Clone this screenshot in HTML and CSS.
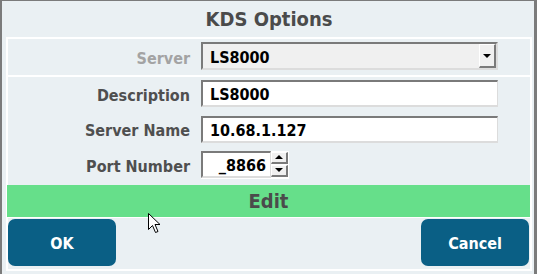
FILE: index.html
```html
<!DOCTYPE html>
<html lang="en">
<head>
    <meta charset="UTF-8">
    <title>KDS Options</title>
    <link rel="stylesheet" href="styles.css">
</head>
<body>
    <div class="dialog">
        <h2 class="title">KDS Options</h2>
        <div class="panel">
            <div class="row server-row">
                <label class="disabled">Server</label>
                <div class="select">
                    <span class="value">LS8000</span>
                    <span class="drop"><i class="tri down"></i></span>
                </div>
            </div>
            <div class="fields">
                <div class="row">
                    <label>Description</label>
                    <div class="input">LS8000</div>
                </div>
                <div class="row">
                    <label>Server Name</label>
                    <div class="input">10.68.1.127</div>
                </div>
                <div class="row">
                    <label>Port Number</label>
                    <div class="spin">
                        <div class="input port">_8866</div>
                        <div class="spin-btns">
                            <span class="sbtn"><i class="tri up"></i></span>
                            <span class="sbtn"><i class="tri down"></i></span>
                        </div>
                    </div>
                </div>
            </div>
            <div class="edit-bar">Edit</div>
            <div class="buttons">
                <button class="btn">OK</button>
                <button class="btn">Cancel</button>
            </div>
        </div>
        <svg class="cursor" width="13" height="21" viewBox="0 0 13 21">
            <path d="M0.5 0.5 L0.5 16.5 L4.5 12.5 L7.5 19.5 L10 18.5 L7 11.5 L12 11.5 Z" fill="#fff" stroke="#000" stroke-width="1"/>
        </svg>
    </div>
</body>
</html>
```

FILE: styles.css
```css
body {
    margin: 0;
    background: #7b7b7b;
    font-family: "DejaVu Sans Condensed", "DejaVu Sans", sans-serif;
    font-stretch: condensed;
    font-weight: bold;
}

.dialog {
    position: relative;
    margin: 1px 3px 0 2px;
    height: 273px;
    background: #eaf0f3;
    padding: 0 2px 0 4px;
    box-sizing: border-box;
}

.title {
    margin: 0;
    height: 36px;
    line-height: 36px;
    font-size: 20px;
    text-align: center;
    color: #4b4b4b;
}

.panel {
    border: 2px solid #fff;
    height: 234px;
    box-sizing: border-box;
}

.row {
    display: flex;
    align-items: center;
    gap: 11px;
}

.row label {
    width: 182px;
    text-align: right;
    font-size: 16px;
    color: #4f4f4f;
    padding-top: 3px;
}

.row label.disabled {
    color: #a3a3a3;
}

.server-row {
    height: 38px;
    align-items: flex-start;
    padding-top: 3px;
    box-sizing: border-box;
    border-bottom: 2px solid #fff;
}

.server-row label {
    line-height: 28px;
}

.select {
    width: 297px;
    height: 28px;
    box-sizing: border-box;
    border: 2px solid #7a7a7a;
    border-right-color: #dcdcdc;
    border-bottom-color: #dcdcdc;
    background: #f0f0f0;
    display: flex;
    align-items: center;
    justify-content: space-between;
    padding-left: 7px;
    font-size: 16px;
    color: #000;
}

.value {
    padding-top: 2px;
}

.drop {
    width: 17px;
    height: 24px;
    box-sizing: border-box;
    border: 1px solid #fff;
    border-right: 2px solid #7a7a7a;
    border-bottom: 2px solid #7a7a7a;
    background: #f0f0f0;
    display: flex;
    align-items: center;
    justify-content: center;
}

.tri {
    width: 0;
    height: 0;
    border-left: 4px solid transparent;
    border-right: 4px solid transparent;
}

.tri.down {
    border-top: 4px solid #000;
}

.tri.up {
    border-bottom: 4px solid #000;
}

.fields {
    display: flex;
    flex-direction: column;
    gap: 8.5px;
    padding-top: 3px;
}

.fields .row {
    height: 27px;
}

.input {
    width: 297px;
    height: 27px;
    box-sizing: border-box;
    border: 2px solid #7a7a7a;
    border-right: 1px solid #dcdcdc;
    border-bottom: 2px solid #dcdcdc;
    background: #fff;
    padding: 1px 0 0 7px;
    line-height: 23px;
    font-size: 16px;
    color: #000;
}

.spin {
    display: flex;
    background: #fff;
    padding: 0 1px 1px 0;
}

.input.port {
    width: 70px;
    padding: 1px 4px 0 0;
    text-align: right;
}

.spin-btns {
    display: flex;
    flex-direction: column;
    gap: 1px;
    padding-top: 1px;
}

.sbtn {
    width: 17px;
    height: 12px;
    box-sizing: border-box;
    border: 1px solid #fff;
    border-right: 2px solid #7a7a7a;
    border-bottom: 2px solid #7a7a7a;
    background: #f0f0f0;
    display: flex;
    align-items: center;
    justify-content: center;
}

.edit-bar {
    margin: 7px 0 0 -1px;
    height: 32px;
    line-height: 32px;
    background: #66df8a;
    border-bottom: 1px solid #fff;
    text-align: center;
    font-size: 20px;
    color: #4b4b4b;
}

.buttons {
    display: flex;
    justify-content: space-between;
    padding: 1px 1px 0 0;
}

.btn {
    width: 108px;
    height: 47px;
    border: 0;
    border-radius: 7px;
    background: #0a5f85;
    color: #fff;
    font-family: inherit;
    font-stretch: condensed;
    font-weight: bold;
    font-size: 16px;
    padding-top: 2px;
}

.cursor {
    position: absolute;
    left: 146px;
    top: 212px;
}
```
